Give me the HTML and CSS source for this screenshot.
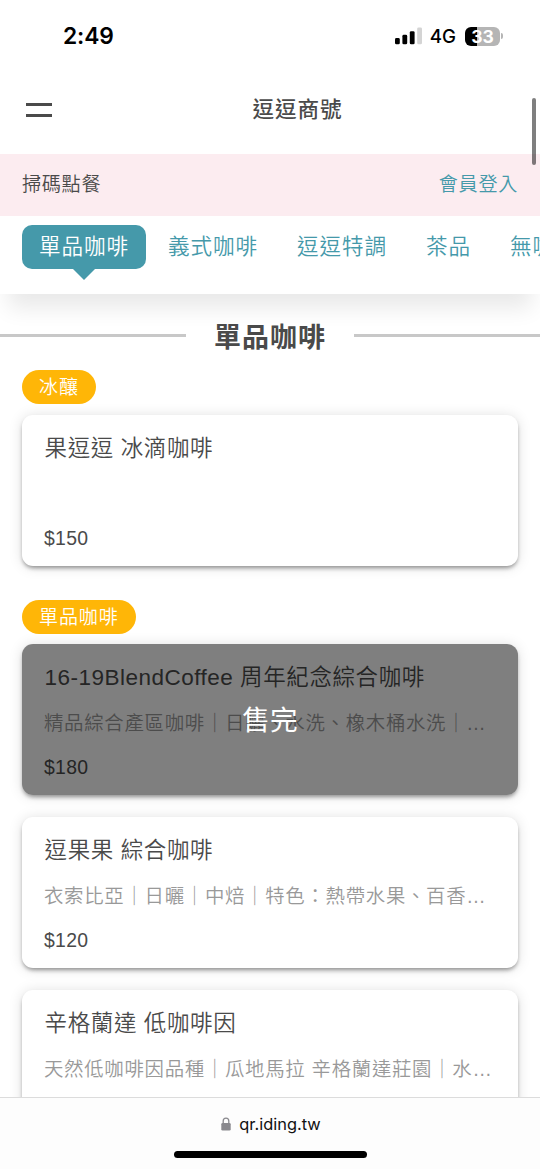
FILE: index.html
```html
<!DOCTYPE html>
<html lang="zh-Hant">
<head>
<meta charset="utf-8">
<meta name="viewport" content="width=device-width">
<title>逗逗商號</title>
<link rel="stylesheet" href="styles.css">
</head>
<body>
<div class="screen">
  <div class="status">
    <span class="clock">2:49</span>
    <span class="indicators">
      <svg class="signal" width="27" height="18" viewBox="0 0 27 18"><rect x="0" y="11" width="4.8" height="6.3" rx="1.4"/><rect x="7.4" y="7.8" width="4.8" height="9.5" rx="1.4"/><rect x="14.8" y="4.2" width="4.8" height="13.1" rx="1.4"/><rect x="22.2" y="0.4" width="4.8" height="16.9" rx="1.4" fill="#d4d4d4"/></svg>
      <span class="network">4G</span>
      <span class="battery"><span class="level">33</span><i class="cap"></i></span>
    </span>
  </div>
  <header class="header">
    <div class="menu"><i></i><i></i></div>
    <h1>逗逗商號</h1>
    <div class="scrollbar"></div>
  </header>
  <div class="notice"><span>掃碼點餐</span><a>會員登入</a></div>
  <nav class="tabs">
    <a class="tab active">單品咖啡</a><a class="tab">義式咖啡</a><a class="tab">逗逗特調</a><a class="tab">茶品</a><a class="tab">無咖啡因</a>
  </nav>
  <main class="list">
    <h2 class="section"><span>單品咖啡</span></h2>
    <div class="pill">冰釀</div>
    <article class="card"><h3>果逗逗 冰滴咖啡</h3><p class="desc"></p><p class="price">$150</p></article>
    <div class="pill second">單品咖啡</div>
    <article class="card"><h3><span class="latin">16-19BlendCoffee</span> 周年紀念綜合咖啡</h3><p class="desc">精品綜合產區咖啡｜日曬、水洗、橡木桶水洗｜…</p><p class="price">$180</p><div class="soldout">售完</div></article>
    <article class="card"><h3>逗果果 綜合咖啡</h3><p class="desc">衣索比亞｜日曬｜中焙｜特色：熱帶水果、百香…</p><p class="price">$120</p></article>
    <article class="card"><h3>辛格蘭達 低咖啡因</h3><p class="desc">天然低咖啡因品種｜瓜地馬拉 辛格蘭達莊園｜水…</p></article>
  </main>
  <footer class="browser">
    <div class="address"><svg width="10" height="14" viewBox="0 0 10 14"><path d="M2.2 6.5V4a2.8 2.9 0 0 1 5.6 0v2.5" fill="none" stroke="#8a898e" stroke-width="1.3"/><rect x="0.3" y="6" width="9.4" height="7.6" rx="1.3" fill="#8a898e"/></svg><span>qr.iding.tw</span></div>
    <div class="home"></div>
  </footer>
</div>
</body>
</html>
```
FILE: styles.css
```css
* { box-sizing: border-box; }
body { margin: 0; background: #fff; }
h1, h2, h3, p { margin: 0; }
.screen {
  width: 540px; height: 1169px; overflow: hidden;
  display: flex; flex-direction: column;
  font-family: "Liberation Sans", "Noto Sans CJK TC", sans-serif;
  font-weight: 350; color: #4a4a4a; background: #fff;
}
.status { height: 72px; flex: none; display: flex; justify-content: space-between; padding: 0 37px 0 63px; align-items: center; color: #000; font-family: Inter, sans-serif; }
.clock { font-size: 22.8px; font-weight: 600; letter-spacing: -0.1px; padding-bottom: 2px; }
.indicators { display: flex; align-items: center; }
.network { font-size: 18.7px; font-weight: 450; margin-left: 8px; margin-right: 9px; }
.battery { display: flex; align-items: center; }
.level { width: 35px; height: 19px; border-radius: 6px; background: linear-gradient(90deg, #000 12px, #b5b5b5 12px); color: #fff; font-size: 17.5px; font-weight: 700; line-height: 19px; text-align: center; }
.cap { width: 2px; height: 6px; margin-left: 1px; border-radius: 0 3px 3px 0; background: #b5b5b5; }
.header { height: 82px; flex: none; position: relative; display: flex; align-items: center; justify-content: center; padding-left: 55px; }
.header h1 { font-size: 21.6px; font-weight: 500; letter-spacing: 0.9px; line-height: 32px; padding-bottom: 6px; }
.menu { position: absolute; left: 26px; top: 31px; display: flex; flex-direction: column; gap: 8px; }
.menu i { width: 26px; height: 3px; background: #4a4a4a; }
.scrollbar { position: absolute; right: 4px; top: 26px; width: 4px; height: 67px; border-radius: 2px; background: rgba(0,0,0,.5); z-index: 5; }
.notice { height: 62px; flex: none; background: #fcecf0; display: flex; justify-content: space-between; align-items: center; padding: 0 22px 4px; font-size: 19.1px; letter-spacing: 0.7px; }
.notice a { color: #4599aa; }
.tabs { height: 78px; flex: none; position: relative; z-index: 2; display: flex; padding: 9px 0 0 22px; gap: 5px; background: #fff; box-shadow: 0 22px 22px -8px rgba(0,0,0,.09); white-space: nowrap; }
.tab { height: 44px; flex: none; padding: 0 17px; line-height: 43px; font-size: 21.6px; letter-spacing: 0.9px; color: #4599aa; border-radius: 10px; position: relative; }
.active { background: #4599aa; color: #fff; }
.active::after { content: ""; position: absolute; top: 44px; left: 51px; border: 11px solid transparent; border-bottom: 0; border-top-color: #4599aa; }
.list { flex: 1; min-height: 0; padding: 0 22px; overflow: hidden; }
.section { margin: 22px -22px 13px; display: flex; align-items: center; gap: 28px; height: 41px; font-size: 27px; letter-spacing: 1px; white-space: nowrap; }
.section span { padding-bottom: 2px; font-weight: 600; }
.section::before, .section::after { content: ""; flex: 1; height: 3px; background: #c8c8c8; margin-bottom: 3px; }
.pill { width: max-content; height: 34px; padding: 0 17px; border-radius: 17px; background: #ffb607; color: #fff; font-size: 19px; letter-spacing: 0.9px; line-height: 35px; margin-bottom: 11px; }
.second { margin-top: 34px; margin-bottom: 10px; }
.card { position: relative; height: 151px; margin-bottom: 22px; padding: 18px 22px 17px; background: #fff; border-radius: 11px; box-shadow: 0 3px 4px -1px rgba(0,0,0,.4), 0 1px 14px rgba(0,0,0,.13); white-space: nowrap; }
.card h3 { font-size: 22.5px; font-weight: 350; letter-spacing: 0.6px; line-height: 32px; height: 32px; padding-left: 0.6px; }
.latin { letter-spacing: 0.48px; }
.desc { height: 28px; line-height: 28px; margin-top: 15px; font-size: 19.4px; letter-spacing: 0.72px; color: #999; }
.price { height: 26px; line-height: 26px; margin-top: 17px; font-size: 19.4px; letter-spacing: 0.3px; }
.soldout { position: absolute; inset: 0; display: flex; align-items: center; justify-content: center; padding-bottom: 4px; border-radius: 11px; background: rgba(0,0,0,.5); color: #fff; font-size: 27.7px; font-weight: 400; }
.browser { height: 72px; flex: none; position: relative; z-index: 3; border-top: 1px solid #dcdcdc; background: #fdfdfd; display: flex; flex-direction: column; align-items: center; color: #111; }
.address { display: flex; align-items: center; gap: 8px; height: 24px; margin: 14px 0 0 2px; font: 400 16.4px/24px Inter, sans-serif; }
.home { width: 193px; height: 7px; border-radius: 4px; background: #000; margin-top: 15px; }
```
